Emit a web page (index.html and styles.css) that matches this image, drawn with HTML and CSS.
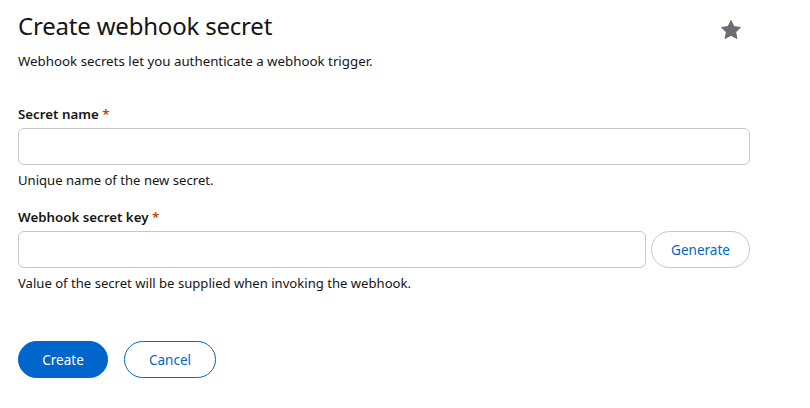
FILE: index.html
```html
<!DOCTYPE html>
<html>
<head>
<meta charset="utf-8">
<link rel="stylesheet" href="styles.css">
</head>
<body>
<div class="page">
  <div class="header">
    <div class="titles">
      <h1 class="title">Create webhook secret</h1>
      <p class="desc">Webhook secrets let you authenticate a webhook trigger.</p>
    </div>
    <button class="star" aria-label="Favorite">
      <svg width="22" height="22" viewBox="0 0 24 24"><path fill="#6a6e73" d="M12 1.8l3.1 6.5 7 .9-5.1 4.9 1.3 7-6.3-3.4-6.3 3.4 1.3-7-5.1-4.9 7-.9z" stroke="#6a6e73" stroke-width="1.2" stroke-linejoin="round"/></svg>
    </button>
  </div>
  <form class="form">
    <div class="group">
      <label class="label">Secret name <span class="req">*</span></label>
      <input class="input" type="text">
      <div class="helper">Unique name of the new secret.</div>
    </div>
    <div class="group">
      <label class="label">Webhook secret key <span class="req">*</span></label>
      <div class="row">
        <input class="input grow" type="text">
        <button type="button" class="btn btn-control">Generate</button>
      </div>
      <div class="helper">Value of the secret will be supplied when invoking the webhook.</div>
    </div>
    <div class="actions">
      <button type="button" class="btn btn-primary">Create</button>
      <button type="button" class="btn btn-secondary">Cancel</button>
    </div>
  </form>
</div>
</body>
</html>
```
FILE: styles.css
```css
* { box-sizing: border-box; }
html, body { margin: 0; background: #fff; }
body {
  font-family: "Noto Sans", "Open Sans", sans-serif;
  color: #151515;
  font-size: 14px;
}
.page {
  padding: 10px 0 0 18px;
  width: 750px;
}
.header {
  display: flex;
  justify-content: space-between;
  align-items: flex-start;
  width: 724px;
}
.title {
  margin: 0;
  font-size: 24px;
  font-weight: 400;
  line-height: 32px;
  letter-spacing: -0.2px;
}
.desc {
  margin: 9px 0 0;
  font-size: 13.3px;
  line-height: 20px;
}
.star {
  border: 0;
  background: none;
  padding: 0;
  margin-top: 9px;
  width: 22px;
  height: 22px;
}
.form {
  margin-top: 33px;
  width: 732px;
  display: flex;
  flex-direction: column;
}
.group { display: flex; flex-direction: column; margin-bottom: 17px; }
.label {
  font-weight: 600;
  font-size: 13.3px;
  line-height: 20px;
  margin-bottom: 4px;
}
.req { color: #c43a0d; font-weight: 600; }
.input {
  height: 37px;
  border: 1px solid #c7c7c7;
  border-radius: 6px;
  font: inherit;
  padding: 0 10px;
  width: 100%;
}
.helper {
  margin-top: 5px;
  line-height: 20px;
  font-size: 13.1px;
}
.row { display: flex; gap: 5px; }
.grow { flex: 1; width: auto; }
.btn {
  font: inherit;
  font-size: 13.5px;
  height: 37px;
  border-radius: 19px;
  padding: 0 18px;
  background: #fff;
  cursor: pointer;
}
.btn-control {
  border: 1px solid #c7c7c7;
  color: #0066cc;
  width: 99px;
}
.actions {
  display: flex;
  gap: 16px;
  margin-top: 31px;
}
.btn-primary {
  background: #0066cc;
  color: #fff;
  border: 1px solid #0066cc;
  width: 90px;
}
.btn-secondary {
  border: 1px solid #0066cc;
  color: #0066cc;
  width: 92px;
}
```
